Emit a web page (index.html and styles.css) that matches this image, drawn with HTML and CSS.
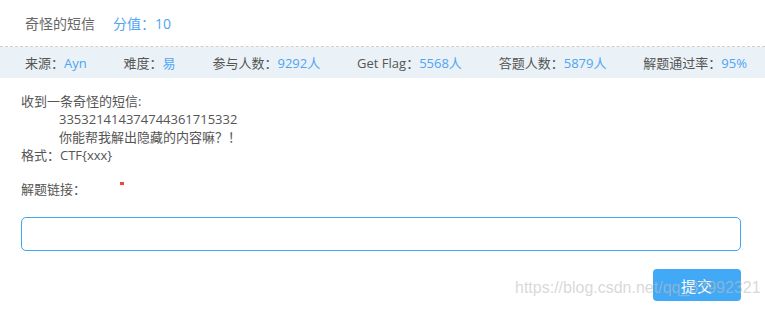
FILE: index.html
```html
<!DOCTYPE html>
<html lang="zh-CN">

<head>
  <meta charset="UTF-8" />
  <title>奇怪的短信</title>
  <link rel="stylesheet" href="styles.css">
</head>

<body>
  <div class="challenge">
    <header class="head">
      <span class="title">奇怪的短信</span>
      <span class="score">分值：10</span>
    </header>

    <div class="stats">
      <span>来源：<em>Ayn</em></span>
      <span>难度：<em>易</em></span>
      <span>参与人数：<em>9292人</em></span>
      <span>Get Flag：<em>5568人</em></span>
      <span>答题人数：<em>5879人</em></span>
      <span>解题通过率：<em>95%</em></span>
    </div>

    <section class="content">
      <div class="desc">
        <p>收到一条奇怪的短信:</p>
        <p class="indent">335321414374744361715332</p>
        <p class="indent">你能帮我解出隐藏的内容嘛？！</p>
        <p>格式：CTF{xxx}</p>
      </div>

      <div class="link">解题链接：<a class="broken" href="#"></a></div>

      <input class="answer" type="text">

      <div class="actions">
        <button class="submit">提交</button>
      </div>
    </section>

    <div class="watermark">https://blog.csdn.net/qq_37992321</div>
  </div>
</body>

</html>
```

FILE: styles.css
```css
body {
  margin: 0;
  font-family: "Open Sans", "Noto Sans CJK SC", sans-serif;
  background: white;
  color: #555;
}

.challenge {
  position: relative;
  width: 765px;
  height: 314px;
  overflow: hidden;
}

.head {
  display: flex;
  align-items: center;
  gap: 18px;
  height: 46px;
  padding: 0 25px;
  border-bottom: 1px dashed #cfcfcf;
  font-size: 14px;
}

.title {
  color: #666;
}

.score {
  color: #4ea5f2;
}

.stats {
  display: flex;
  align-items: center;
  justify-content: space-between;
  height: 31px;
  padding: 0 18px 0 25px;
  background: #eaf1f7;
  font-size: 13px;
  color: #555;
}

.stats span {
  flex-shrink: 0;
  white-space: nowrap;
}

.stats em {
  font-style: normal;
  color: #4ea5f2;
}

.content {
  padding: 14px 21px 0 21px;
  font-size: 13px;
}

.desc p {
  margin: 0;
  line-height: 18px;
}

.desc .indent {
  padding-left: 38px;
}

.link {
  margin-top: 16px;
  line-height: 18px;
}

.broken {
  display: inline-block;
  width: 4px;
  height: 3px;
  margin-left: 34px;
  vertical-align: 9px;
  background: #f5443c;
}

.answer {
  display: block;
  box-sizing: border-box;
  width: 720px;
  height: 34px;
  margin-top: 19px;
  border: 1px solid #3ea6f2;
  border-radius: 5px;
  outline: none;
}

.actions {
  display: flex;
  justify-content: flex-end;
  width: 720px;
  margin-top: 18px;
}

.submit {
  width: 88px;
  height: 32px;
  border: none;
  border-radius: 4px;
  background: #41a9f5;
  color: white;
  font-family: inherit;
  font-size: 15px;
  letter-spacing: 1px;
}

.watermark {
  position: absolute;
  left: 515px;
  top: 279px;
  font-family: "Liberation Sans", Arial, sans-serif;
  font-size: 16px;
  color: rgba(190, 190, 190, 0.6);
  pointer-events: none;
}
```
